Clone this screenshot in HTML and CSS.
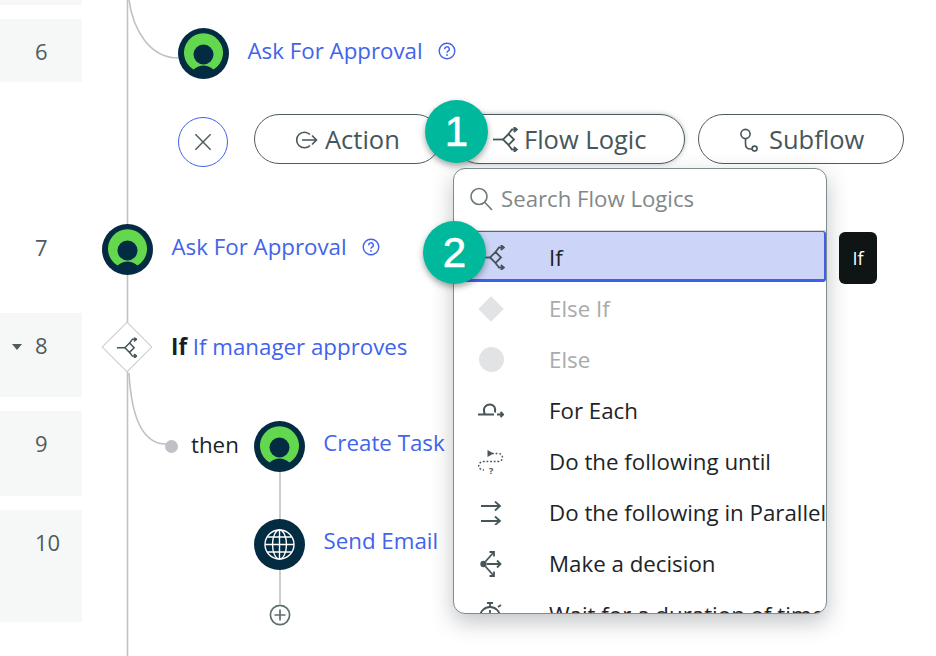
FILE: index.html
```html
<!DOCTYPE html>
<html lang="en">
<head>
<meta charset="utf-8">
<title>Flow Logic</title>
<link rel="stylesheet" href="styles.css">
</head>
<body>
<svg class="defs" width="0" height="0" aria-hidden="true">
  <defs>
    <symbol id="action-avatar" viewBox="0 0 51 51">
      <circle cx="25.5" cy="25.5" r="25.5" fill="#032c42"/>
      <path d="M15.5 41.5A19.5 19.5 0 1 1 35.5 41.5Q25.5 33.5 15.5 41.5Z" fill="#63d84f"/>
      <circle cx="25.5" cy="26.5" r="10" fill="#032c42"/>
    </symbol>
    <symbol id="flow-logic" viewBox="0 0 25 25">
      <g fill="none" stroke="currentColor" stroke-width="1.8">
        <path d="M0 12.5H10"/>
        <path d="M15.500 7L21 12.500L15.500 18L10 12.500Z"/>
        <path d="M15.500 7L19 2.500H24M20.800 0L24 2.500L20.800 5"/>
        <path d="M15.500 18L19 22.500H24M20.800 20L24 22.500L20.800 25"/>
      </g>
    </symbol>
  </defs>
</svg>
<main class="page">
  <aside class="gutter">
    <div class="line-no band band-top"></div>
    <div class="line-no band band-6">6</div>
    <div class="line-no spacer"></div>
    <div class="line-no row-7">7</div>
    <div class="line-no band row-8"><span class="caret"></span>8</div>
    <div class="line-no band row-9">9</div>
    <div class="line-no band row-10">10</div>
  </aside>

  <svg class="wires" width="936" height="656" viewBox="0 0 936 656" aria-hidden="true">
    <path d="M127.5 0V656"/>
    <path d="M129 0C133 30 150 58 178 58"/>
    <path d="M129 373C131 410 140 444 166 444"/>
    <path d="M280 472V520M280 569V604"/>
  </svg>

  <div class="node node-6">
    <svg class="avatar"><use href="#action-avatar"/></svg>
    <a class="link">Ask For Approval</a>
    <svg class="help" viewBox="0 0 18 18"><circle cx="9" cy="9" r="7.8"/><path d="M6.7 7.2A2.3 2.3 0 1 1 9.9 9.2C9.2 9.6 9 10 9 10.8"/><circle class="help-dot" cx="9" cy="13" r=".9"/></svg>
  </div>

  <div class="node node-7">
    <svg class="avatar"><use href="#action-avatar"/></svg>
    <a class="link">Ask For Approval</a>
    <svg class="help" viewBox="0 0 18 18"><circle cx="9" cy="9" r="7.8"/><path d="M6.7 7.2A2.3 2.3 0 1 1 9.9 9.2C9.2 9.6 9 10 9 10.8"/><circle class="help-dot" cx="9" cy="13" r=".9"/></svg>
  </div>

  <div class="node node-8">
    <div class="diamond"><svg class="diamond-icon"><use href="#flow-logic"/></svg></div>
    <p class="if-label"><b>If</b> <a class="link">If manager approves</a></p>
  </div>

  <div class="node node-9">
    <span class="dot"></span>
    <span class="then">then</span>
    <svg class="avatar"><use href="#action-avatar"/></svg>
    <a class="link">Create Task</a>
  </div>

  <div class="node node-10">
    <svg class="avatar" viewBox="0 0 51 51">
      <circle cx="25.5" cy="25.5" r="25.5" fill="#032c42"/>
      <g fill="none" stroke="#fff" stroke-width="1.4">
        <circle cx="25.5" cy="25.5" r="14.5"/>
        <ellipse cx="25.5" cy="25.5" rx="7" ry="14.5"/>
        <path d="M25.5 11V40M11 25.5H40M13.2 18H37.8M13.2 33H37.8"/>
      </g>
    </svg>
    <a class="link">Send Email</a>
  </div>

  <svg class="add" viewBox="0 0 22 22"><circle cx="11" cy="11" r="9.6"/><path d="M11 5.5V16.5M5.5 11H16.5"/></svg>

  <div class="toolbar">
    <button class="close" type="button"><svg viewBox="0 0 20 20"><path d="M1.5 1.5L18.5 18.5M18.5 1.5L1.5 18.5"/></svg></button>
    <button class="pill pill-action" type="button">
      <svg class="pill-icon" width="23" height="18" viewBox="0 0 23 18"><path d="M15 3.5A7.8 7.8 0 1 0 15 14.5"/><path d="M7 9H21.5M17 4.5L21.5 9L17 13.5"/></svg>
      Action
    </button>
    <button class="pill pill-flow" type="button">
      <svg class="pill-flow-icon"><use href="#flow-logic"/></svg>
      Flow Logic
    </button>
    <button class="pill pill-sub" type="button">
      <svg class="pill-icon" width="18" height="24" viewBox="0 0 18 24"><circle cx="5.5" cy="6" r="4.6"/><path d="M5.5 10.6V16Q5.5 21 10.5 21H12"/><circle cx="14.6" cy="20.6" r="2.5"/></svg>
      Subflow
    </button>
  </div>

  <section class="menu">
    <div class="search">
      <svg class="search-icon" viewBox="0 0 24 24"><circle cx="10" cy="9.5" r="8"/><path d="M16 15.5L23 23"/></svg>
      <span>Search Flow Logics</span>
    </div>
    <ul class="menu-list">
      <li class="item item-active"><span class="item-icon"><svg class="if-icon"><use href="#flow-logic"/></svg></span>If</li>
      <li class="item item-off"><span class="item-icon"><span class="shape-diamond"></span></span>Else If</li>
      <li class="item item-off"><span class="item-icon"><span class="shape-circle"></span></span>Else</li>
      <li class="item"><span class="item-icon"><svg width="26" height="20" viewBox="0 0 26 20"><path class="ic-bold" d="M0 13.500H16M7 13.500C4 7 8 3.500 12 3.500C16 3.500 18 7 17 11.500"/><path class="ic-bold" d="M19 13.500H25M22.500 11L25 13.500L22.500 16"/></svg></span>For Each</li>
      <li class="item"><span class="item-icon"><svg width="26" height="24" viewBox="0 0 26 24"><path class="ic-dash" d="M14 3.500H20C26 3.500 26 11.500 20 11.500H6C-1 11.500 -1 20 6 20"/><path class="ic-fill" d="M9.500 0L15.500 3.500L9.500 7Z"/><text class="ic-q" x="11" y="23.500">?</text></svg></span>Do the following until</li>
      <li class="item"><span class="item-icon"><svg width="22" height="24" viewBox="0 0 22 24"><path class="ic" d="M1 5H20M15 0.500L20 5L15 9.500M1 20H20M15 15.500L20 20L15 24"/></svg></span>Do the following in Parallel</li>
      <li class="item"><span class="item-icon"><svg width="22" height="28" viewBox="0 0 22 28"><circle class="ic-fill" cx="3.500" cy="14" r="3.200"/><path class="ic" d="M5.500 11.500L13.500 2.500M9.500 2H14V6.500M7 14H20.500M17 10.500L20.500 14L17 17.500M5.500 16.500L13.500 25.500M9.500 26H14V21.500"/></svg></span>Make a decision</li>
      <li class="item"><span class="item-icon"><svg width="26" height="26" viewBox="0 0 26 26"><circle class="ic" cx="12" cy="15" r="10"/><path class="ic" d="M12 5V1M9 1H15M12 15V8M20 5L23 3"/></svg></span>Wait for a duration of time</li>
    </ul>
  </section>

  <div class="tooltip">If</div>
  <div class="step step-1">1</div>
  <div class="step step-2">2</div>
</main>
</body>
</html>
```
FILE: styles.css
```css
* { box-sizing: border-box; }
html, body { margin: 0; padding: 0; background: #fff; }
body { font-family: "Open Sans", "Liberation Sans", sans-serif; }
.defs { position: absolute; }
.page { position: relative; width: 936px; height: 656px; overflow: hidden; background: #fff; }

/* line numbers */
.gutter { display: flex; flex-direction: column; gap: 14px; width: 82px; }
.line-no { padding: 17px 0 0 35px; font-size: 22px; line-height: 30px; color: #4f5b5d; position: relative; }
.band { background: #f6f8f7; }
.band-top { height: 5px; padding: 0; }
.band-6 { height: 63px; }
.spacer { height: 105px; }
.row-7 { height: 84px; }
.row-8 { height: 84px; }
.row-9 { height: 85px; }
.row-10 { height: 112px; }
.caret { position: absolute; left: 12px; top: 31px; border: 5.500px solid transparent; border-top: 6px solid #4f5b5d; border-bottom: 0; }

/* connectors */
.wires { position: absolute; left: 0; top: 0; }
.wires path { fill: none; stroke: #bfc1c4; stroke-width: 1.6; }

/* nodes */
.node { position: absolute; display: flex; align-items: center; }
.avatar { width: 51px; height: 51px; flex: none; display: block; }
.link { color: #4263eb; font-size: 22.300px; line-height: 30px; white-space: nowrap; }
.help { width: 18px; height: 18px; flex: none; fill: none; stroke: #4263eb; stroke-width: 1.4; margin-left: 15px; }
.help-dot { fill: #4263eb; stroke: none; }
.node .avatar + .link { margin-left: 18.500px; position: relative; top: -3px; }
.node .link + .help { position: relative; top: -3px; }
.node-6 { left: 178px; top: 28px; }
.node-7 { left: 102px; top: 224px; }
.node-8 { left: 102px; top: 322px; }
.node-9 { left: 165px; top: 421px; }
.node-10 { left: 254px; top: 519px; }
.node-9 .avatar + .link, .node-10 .avatar + .link { top: -4px; }
.diamond { width: 36px; height: 36px; margin: 7px; flex: none; transform: rotate(45deg); background: #fff; border: 1.300px solid #c8cacb; display: flex; align-items: center; justify-content: center; }
.diamond-icon { width: 21px; height: 21px; transform: rotate(-45deg); color: #46565a; flex: none; }
.if-label { margin: -1px 0 0 19px; font-size: 22.300px; line-height: 30px; white-space: nowrap; color: #1a1e1f; }
.dot { width: 13px; height: 13px; border-radius: 50%; background: #c0c1c6; flex: none; }
.then { margin: -3px 15px 0 13px; font-size: 22.300px; line-height: 30px; color: #1e2223; }
.add { position: absolute; left: 269px; top: 604px; width: 22px; height: 22px; fill: #fff; stroke: #5f6e70; stroke-width: 1.700; }

/* toolbar */
.toolbar { position: absolute; left: 178px; top: 114px; display: flex; align-items: flex-start; gap: 13px; }
.close { width: 50px; height: 50px; margin: 3px 13px 0 0; padding: 0; border-radius: 50%; border: 1.700px solid #4263eb; background: #fff; display: flex; align-items: center; justify-content: center; }
.close svg { width: 18px; height: 18px; fill: none; stroke: #4f5b5d; stroke-width: 1.600; }
.pill { height: 50px; padding: 1px 0 0; border-radius: 25px; border: 1.600px solid #4f5b5d; background: #fff; color: #46565a; font: 25.500px/1 "Open Sans", "Liberation Sans", sans-serif; display: flex; align-items: center; justify-content: flex-start; white-space: nowrap; }
.pill-action { width: 187px; padding-left: 40px; gap: 7px; }
.pill-flow { width: 231px; padding-left: 38px; gap: 6px; box-shadow: 0 0 5px rgba(60, 70, 72, .35); }
.pill-sub { width: 206px; padding-left: 41px; gap: 11px; }
.pill-icon { fill: none; stroke: #46565a; stroke-width: 1.600; flex: none; }
.pill-flow-icon { width: 25px; height: 25px; color: #46565a; flex: none; }

/* menu */
.menu { position: absolute; left: 453px; top: 168px; width: 374px; height: 446px; overflow: hidden; background: #fff; border: 1.500px solid #7d8c8f; border-radius: 12px; box-shadow: 0 8px 22px rgba(30, 40, 45, .28); }
.search { height: 62px; display: flex; align-items: center; gap: 8px; padding: 0 0 2px 15px; font-size: 22.200px; color: #80888a; border-bottom: 1.500px solid #d6d9da; }
.search-icon { width: 24px; height: 24px; fill: none; stroke: #6d787a; stroke-width: 1.600; flex: none; }
.menu-list { margin: 0; padding: 0; list-style: none; }
.item { height: 51px; padding-top: 2px; display: flex; align-items: center; font-size: 22.300px; color: #1e2426; white-space: nowrap; }
.item-active { background: #ccd4f7; border: solid #3f5fe8; border-width: 1.500px 2px 3px 2px; border-radius: 3px; padding-top: 3px; }
.item-off { color: #a7abad; }
.item-icon { width: 95px; flex: none; display: flex; align-items: center; justify-content: center; padding-right: 21px; color: #46565a; }
.item-active .item-icon { width: 93px; }
.if-icon { width: 25px; height: 25px; flex: none; }
.shape-diamond { width: 18px; height: 18px; background: #e1e3e5; transform: rotate(45deg); }
.shape-circle { width: 25px; height: 25px; border-radius: 50%; background: #e1e3e5; }
.ic { fill: none; stroke: #46565a; stroke-width: 1.800; }
.ic-bold { fill: none; stroke: #46565a; stroke-width: 2; }
.ic-fill { fill: #46565a; }
.ic-dash { fill: none; stroke: #46565a; stroke-width: 1.400; stroke-dasharray: 1.800 1.800; }
.ic-q { font: bold 9px "Open Sans", sans-serif; fill: #46565a; }

/* overlays */
.tooltip { position: absolute; left: 839px; top: 232px; width: 38px; height: 52px; border-radius: 6px; background: #0f1414; color: #fff; font-size: 18px; display: flex; align-items: center; justify-content: center; }
.step { position: absolute; width: 63px; height: 63px; border-radius: 50%; background: #00b89c; color: #fff; font: 42px/63px "Liberation Sans", Arial, sans-serif; -webkit-text-stroke: .6px #fff; text-align: center; box-shadow: 0 3px 6px rgba(20, 30, 30, .4); }
.step-1 { left: 425px; top: 100px; }
.step-2 { left: 423px; top: 221px; }
```
